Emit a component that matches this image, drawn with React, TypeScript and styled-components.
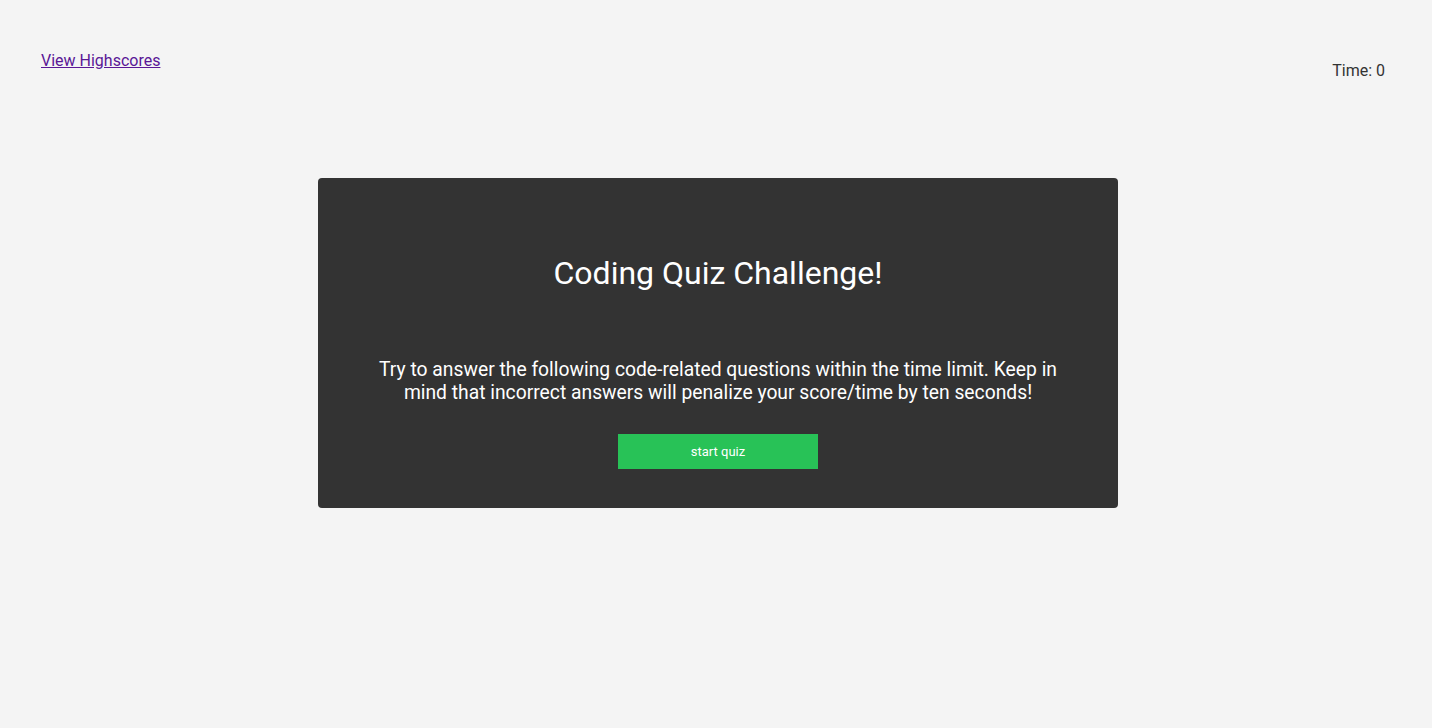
import React from "react";
import styled, { createGlobalStyle } from "styled-components";

const Global = createGlobalStyle`
  html, body { margin: 0; padding: 0; background: #f4f4f4; }
  body { font-family: Roboto, "Noto Sans", Arial, sans-serif; color: #333; }
`;

const Page = styled.div`
  min-height: 728px;
  display: flex;
  flex-direction: column;
`;

const Header = styled.header`
  display: flex;
  justify-content: space-between;
  align-items: flex-start;
  padding: 51px 47px 0 41px;
`;

const HighscoreLink = styled.a`
  font-size: 16px;
  line-height: 19px;
  color: #5a1796;
  text-decoration: underline;
`;

const Timer = styled.div`
  font-size: 16px;
  line-height: 19px;
  color: #333;
  margin-top: 10px;
`;

const Main = styled.main`
  display: flex;
  justify-content: center;
  padding: 98px 0 0 4px;
`;

const Card = styled.section`
  width: 800px;
  box-sizing: border-box;
  background: #333333;
  border-radius: 4px;
  padding: 77px 55px 39px;
  display: flex;
  flex-direction: column;
  align-items: center;
  color: #fff;
`;

const Title = styled.h1`
  margin: 0;
  font-size: 32px;
  line-height: 37px;
  font-weight: 400;
`;

const Intro = styled.p`
  margin: 66px 0 0;
  font-size: 19.3px;
  line-height: 23px;
  text-align: center;
`;

const StartButton = styled.button`
  margin-top: 30px;
  width: 200px;
  height: 35px;
  border: none;
  background: #28c257;
  color: #fff;
  font-family: Roboto, Arial, sans-serif;
  font-size: 13px;
  cursor: pointer;
`;

export default function App() {
  return (
    <Page>
      <Global />
      <Header>
        <HighscoreLink href="#">View Highscores</HighscoreLink>
        <Timer>Time: 0</Timer>
      </Header>
      <Main>
        <Card>
          <Title>Coding Quiz Challenge!</Title>
          <Intro>
            Try to answer the following code-related questions within the time limit. Keep in mind that
            incorrect answers will penalize your score/time by ten seconds!
          </Intro>
          <StartButton>start quiz</StartButton>
        </Card>
      </Main>
    </Page>
  );
}
